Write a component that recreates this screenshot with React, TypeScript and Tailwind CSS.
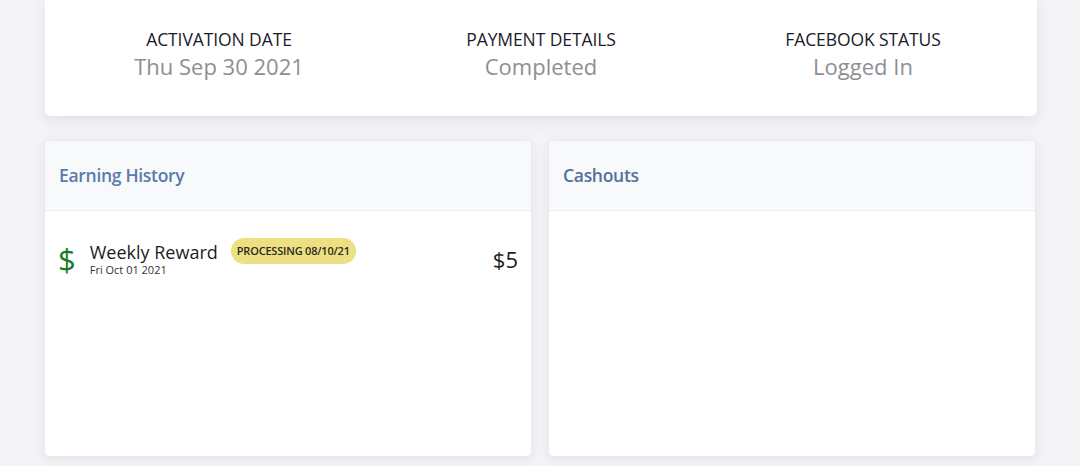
export default function App() {
  return (
    <div className="w-[1080px] h-[466px] overflow-hidden bg-[#f4f4f7] font-['Open_Sans',sans-serif]">
      <div className="mx-[45px] w-[992px] h-[116px] bg-white rounded-b-[6px] shadow-[0_4px_14px_rgba(40,40,80,0.10)] flex items-start pt-[28px] px-[13px]">
        {[
          ["ACTIVATION DATE", "Thu Sep 30 2021"],
          ["PAYMENT DETAILS", "Completed"],
          ["FACEBOOK STATUS", "Logged In"],
        ].map(([l, v]) => (
          <div key={l} className="flex-1 flex flex-col items-center">
            <div className="text-[17.5px] leading-[22px] font-medium text-[#1b1b2a] tracking-[-0.1px]">{l}</div>
            <div className="text-[22px] leading-[30px] mt-[1px] text-[#8e8e93]">{v}</div>
          </div>
        ))}
      </div>
      <div className="flex gap-[18px] mx-[45px] mt-[25px]">
        <div className="w-[486px] h-[315px] bg-white rounded-[5px] shadow-[0_2px_12px_rgba(40,40,80,0.10)] overflow-hidden flex flex-col">
          <div className="h-[70px] bg-[#f8f9fb] border-b border-[#ebedf2] flex items-center px-[14px]">
            <span className="text-[17.5px] font-semibold text-[#5a7bab] tracking-[-0.3px]">Earning History</span>
          </div>
          <div className="flex items-center px-[13px] pt-[30px]">
            <span className="text-[31px] leading-[30px] text-[#1d7a25] mr-[14px]">$</span>
            <div className="flex flex-col">
              <span className="text-[18px] leading-[22px] text-[#1d1d24]">Weekly Reward</span>
              <span className="text-[11px] leading-[14px] text-[#333]">Fri Oct 01 2021</span>
            </div>
            <span className="ml-[13px] self-start mt-[-3px] bg-[#ede083] rounded-full px-[6px] h-[26px] flex items-center text-[11px] font-semibold text-[#2a2a1a] tracking-[-0.2px]">PROCESSING 08/10/21</span>
            <span className="ml-auto text-[22px] text-[#1d1d24]">$5</span>
          </div>
        </div>
        <div className="w-[486px] h-[315px] bg-white rounded-[5px] shadow-[0_2px_12px_rgba(40,40,80,0.10)] overflow-hidden flex flex-col">
          <div className="h-[70px] bg-[#f8f9fb] border-b border-[#ebedf2] flex items-center px-[14px]">
            <span className="text-[17.5px] font-semibold text-[#54709a] tracking-[-0.3px]">Cashouts</span>
          </div>
        </div>
      </div>
    </div>
  );
}
